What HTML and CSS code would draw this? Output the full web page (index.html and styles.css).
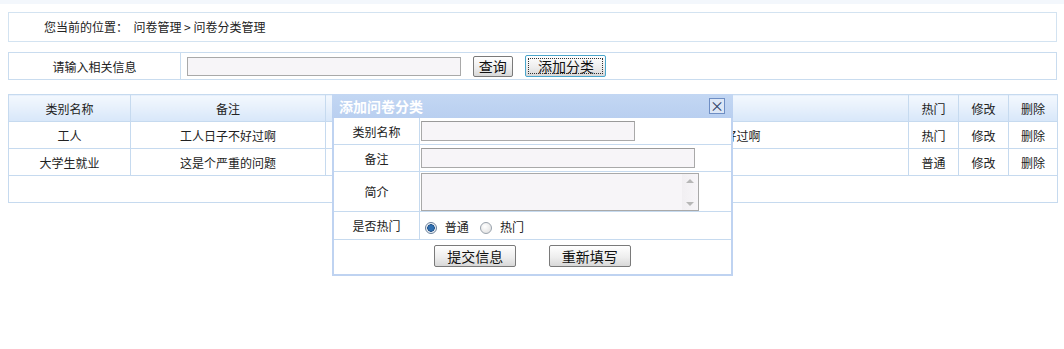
FILE: index.html
```html
<!DOCTYPE html>
<html lang="zh-CN">
<head>
    <meta charset="UTF-8">
    <title>问卷分类管理</title>
    <link rel="stylesheet" href="styles.css">
</head>
<body>

<div class="topline"></div>

<div class="page">
    <div class="crumb">您当前的位置：&nbsp; 问卷管理 &gt; 问卷分类管理</div>

    <table class="search">
        <tr>
            <td class="search-label">请输入相关信息</td>
            <td class="search-field">
                <input type="text" class="search-input">
                <button class="btn btn-query">查询</button>
                <button class="btn btn-add">添加分类</button>
            </td>
        </tr>
    </table>

    <table class="list">
        <colgroup>
            <col style="width:122px">
            <col style="width:195px">
            <col style="width:191px">
            <col style="width:392px">
            <col style="width:50px">
            <col style="width:50px">
            <col style="width:49px">
        </colgroup>
        <tr>
            <th>类别名称</th>
            <th>备注</th>
            <th></th>
            <th></th>
            <th>热门</th>
            <th>修改</th>
            <th>删除</th>
        </tr>
        <tr>
            <td>工人</td>
            <td>工人日子不好过啊</td>
            <td></td>
            <td>工人日子不好过啊</td>
            <td>热门</td>
            <td>修改</td>
            <td>删除</td>
        </tr>
        <tr>
            <td>大学生就业</td>
            <td>这是个严重的问题</td>
            <td></td>
            <td></td>
            <td>普通</td>
            <td>修改</td>
            <td>删除</td>
        </tr>
        <tr class="empty">
            <td colspan="7"></td>
        </tr>
    </table>
</div>

<div class="dialog">
    <div class="dialog-title">
        <span>添加问卷分类</span>
        <span class="dialog-close">×</span>
    </div>
    <table class="form">
        <tr class="row-short">
            <td class="form-label">类别名称</td>
            <td><input type="text" class="field field-name"></td>
        </tr>
        <tr class="row-short">
            <td class="form-label">备注</td>
            <td><input type="text" class="field field-note"></td>
        </tr>
        <tr class="row-area">
            <td class="form-label">简介</td>
            <td>
                <div class="area-box">
                    <textarea class="area"></textarea>
                    <div class="area-scroll">
                        <span class="arrow-up"></span>
                        <span class="arrow-down"></span>
                    </div>
                </div>
            </td>
        </tr>
        <tr class="row-hot">
            <td class="form-label">是否热门</td>
            <td>
                <label class="radio-item"><input type="radio" name="hot" class="radio" checked> 普通</label>
                <label class="radio-item"><input type="radio" name="hot" class="radio"> 热门</label>
            </td>
        </tr>
        <tr class="row-btns">
            <td colspan="2">
                <button class="btn btn-form">提交信息</button>
                <button class="btn btn-form">重新填写</button>
            </td>
        </tr>
    </table>
</div>

</body>
</html>
```

FILE: styles.css
```css
body {
    margin: 0;
    font-family: "Noto Sans CJK SC", "DejaVu Sans", sans-serif;
    font-size: 12px;
    color: #222;
    background: #fff;
}

.topline {
    height: 4px;
    background: #f3f7fc;
}

.page {
    padding: 8px 7px 0 8px;
}

.crumb {
    height: 28px;
    line-height: 28px;
    border: 1px solid #d3e3f1;
    padding-left: 35px;
}

table {
    border-collapse: collapse;
}

.search {
    width: 100%;
    margin-top: 10px;
}

.search td {
    border: 1px solid #c9dcef;
    height: 26px;
    padding: 0;
}

.search-label {
    width: 171px;
    text-align: center;
}

.search-field {
    padding-left: 6px !important;
}

.search-input {
    width: 272px;
    height: 17px;
    border: 1px solid #a9a9a9;
    background: #f7f5f8;
    vertical-align: middle;
    padding: 0;
    margin: 0 9px 0 0;
}

.btn {
    font-family: "Noto Sans CJK SC", "DejaVu Sans", sans-serif;
    font-size: 14px;
    line-height: 17px;
    color: #111;
    border: 1px solid #7a7a7a;
    border-radius: 2px;
    background: linear-gradient(#ffffff, #ececec 60%, #d8d8d8);
    padding: 0;
    vertical-align: middle;
    cursor: pointer;
}

.btn-query {
    width: 40px;
    height: 21px;
    margin-right: 10px;
}

.btn-add {
    width: 81px;
    height: 22px;
    border: 1px solid #4aa6cc;
    outline: 1px dotted #333;
    outline-offset: -4px;
}

.list {
    width: 100%;
    margin-top: 14px;
    table-layout: fixed;
}

.list th,
.list td {
    border: 1px solid #c6daef;
    height: 26px;
    padding: 0;
    text-align: center;
    font-weight: normal;
    white-space: nowrap;
    overflow: hidden;
}

.list th {
    background: linear-gradient(#f3f8fe, #d8e7f9);
}

.dialog {
    position: absolute;
    left: 332px;
    top: 94px;
    width: 397px;
    height: 178px;
    border: 2px solid #bfd3f1;
    background: #fff;
}

.dialog-title {
    height: 24px;
    margin: -2px -2px 0;
    padding: 0 8px 0 7px;
    background: linear-gradient(#c3d7f3, #b9cff0);
    color: #fff;
    font-size: 14px;
    font-weight: bold;
    display: flex;
    align-items: center;
    justify-content: space-between;
    line-height: 22px;
}

.dialog-close {
    width: 14px;
    height: 14px;
    line-height: 13px;
    border: 1px solid #6e8ec4;
    background: #dde7f6;
    color: #2b3f66;
    font-size: 14px;
    font-weight: normal;
    text-align: center;
}

.form {
    width: 100%;
}

.form td {
    border: 1px solid #c6daef;
    padding: 0;
}

.form tr:first-child td {
    border-top: none;
}

.form td:first-child {
    border-left: none;
}

.form td:last-child {
    border-right: none;
}

.form tr:last-child td {
    border-bottom: none;
}

.form-label {
    width: 85px;
    text-align: center;
}

.row-short td {
    height: 26px;
}

.row-area td {
    height: 39px;
}

.row-hot td {
    height: 27px;
}

.row-btns td {
    height: 32px;
    text-align: center;
}

.field {
    height: 18px;
    border: 1px solid #a9a9a9;
    border-top-color: #9a9a9a;
    background: #f7f5f8;
    margin: 0 0 0 1px;
    padding: 0 2px;
    vertical-align: middle;
    display: block;
}

.field-name {
    width: 208px;
}

.field-note {
    width: 268px;
}

.area-box {
    display: flex;
    width: 276px;
    height: 36px;
    margin-left: 1px;
    border: 1px solid #a9a9a9;
    background: #f7f5f8;
}

.area {
    flex: 1;
    border: none;
    background: transparent;
    resize: none;
    padding: 0;
    outline: none;
}

.area-scroll {
    width: 16px;
    display: flex;
    flex-direction: column;
    justify-content: space-between;
    align-items: center;
    padding: 5px 0 4px;
    background: linear-gradient(90deg, #f1eff2, #f7f5f8);
}

.arrow-up,
.arrow-down {
    width: 0;
    height: 0;
    border-left: 4px solid transparent;
    border-right: 4px solid transparent;
}

.arrow-up {
    border-bottom: 4px solid #b7b7b7;
}

.arrow-down {
    border-top: 4px solid #b7b7b7;
}

.radio-item {
    margin-left: 5px;
    margin-right: 4px;
    vertical-align: middle;
}

.radio {
    appearance: none;
    -webkit-appearance: none;
    width: 12px;
    height: 12px;
    margin: 0 5px 0 0;
    border: 1px solid #9aa3ad;
    border-radius: 50%;
    background: radial-gradient(circle at 40% 35%, #ffffff, #dcdcdc);
    vertical-align: -2px;
}

.radio:checked {
    border-color: #6a7f99;
    background: radial-gradient(circle, #2f6fb1 0 2.5px, #1d4f86 3.5px, #e6ebf1 4px, #ffffff 6px);
}

.btn-form {
    width: 82px;
    height: 22px;
    margin: 0 15px;
}
```
